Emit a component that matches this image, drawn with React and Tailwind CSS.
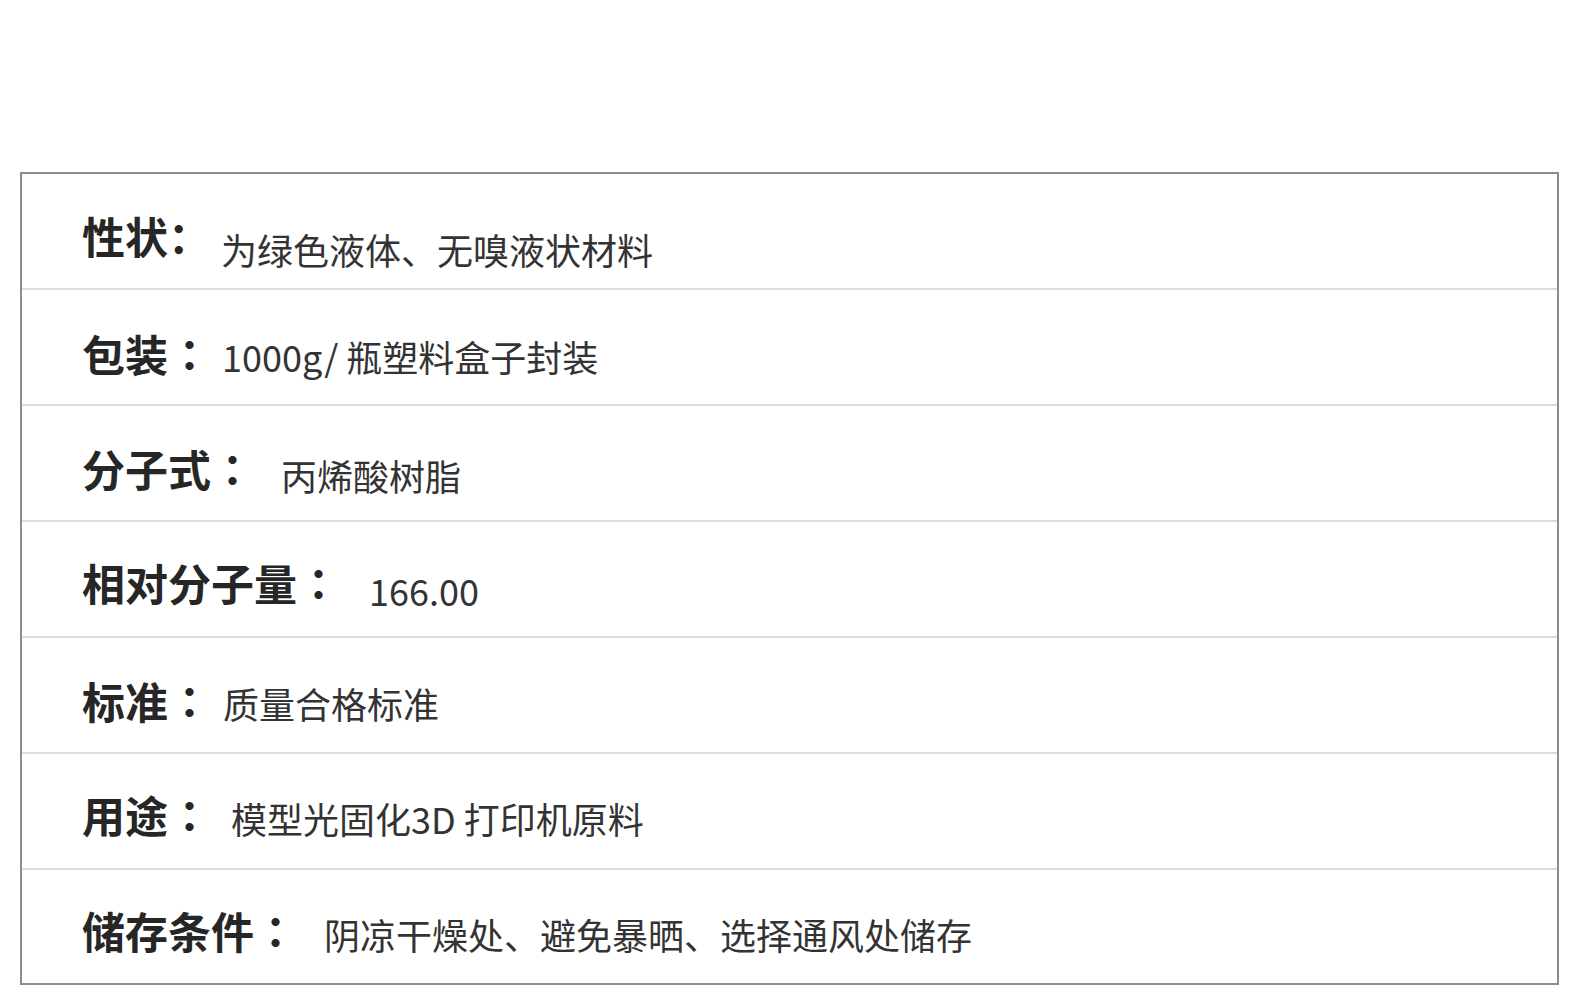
import React from "react";

const rows = [
  { label: "性状", tc: false, value: "为绿色液体、无嗅液状材料", lw: "w-[139px]", lm: "mt-[40px]", vm: "mt-[57px]" },
  { label: "包装", tc: true, value: "1000g/ 瓶塑料盒子封装", lw: "w-[140px]", lm: "mt-[42px]", vm: "mt-[48px]" },
  { label: "分子式", tc: true, value: "丙烯酸树脂", lw: "w-[199px]", lm: "mt-[41px]", vm: "mt-[51px]" },
  { label: "相对分子量", tc: true, value: "166.00", lw: "w-[287px]", lm: "mt-[39px]", vm: "mt-[50px]" },
  { label: "标准", tc: true, value: "质量合格标准", lw: "w-[141px]", lm: "mt-[41px]", vm: "mt-[47px]" },
  { label: "用途", tc: true, value: "模型光固化3D 打印机原料", lw: "w-[149px]", lm: "mt-[39px]", vm: "mt-[46px]" },
  { label: "储存条件", tc: true, value: "阴凉干燥处、避免暴晒、选择通风处储存", lw: "w-[242px]", lm: "mt-[39px]", vm: "mt-[46px]" },
];

export default function App() {
  return (
    <div
      className="w-[1580px] h-[1000px] bg-white pt-[172px]"
      style={{ fontFamily: '"Noto Sans CJK SC", "Noto Sans", sans-serif' }}
    >
      <div className="ml-[20px] w-[1539px] border-2 border-[#8c8c8c] flex flex-col">
        {rows.map((r, i) => (
          <div
            key={i}
            className={
              "flex items-start pl-[60px] " +
              (i < rows.length - 1 ? "h-[116px] border-b-2 border-[#dcdcdc]" : "h-[113px]")
            }
          >
            <div className={"shrink-0 text-[43px] leading-none font-bold text-[#262626] whitespace-nowrap " + r.lw + " " + r.lm}>
              {r.label}
              {r.tc ? (
                <span className="font-['Noto_Sans_CJK_TC',sans-serif]">：</span>
              ) : (
                <span>：</span>
              )}
            </div>
            <div className={"text-[36px] leading-none text-[#333333] whitespace-nowrap " + r.vm}>
              {r.value}
            </div>
          </div>
        ))}
      </div>
    </div>
  );
}
